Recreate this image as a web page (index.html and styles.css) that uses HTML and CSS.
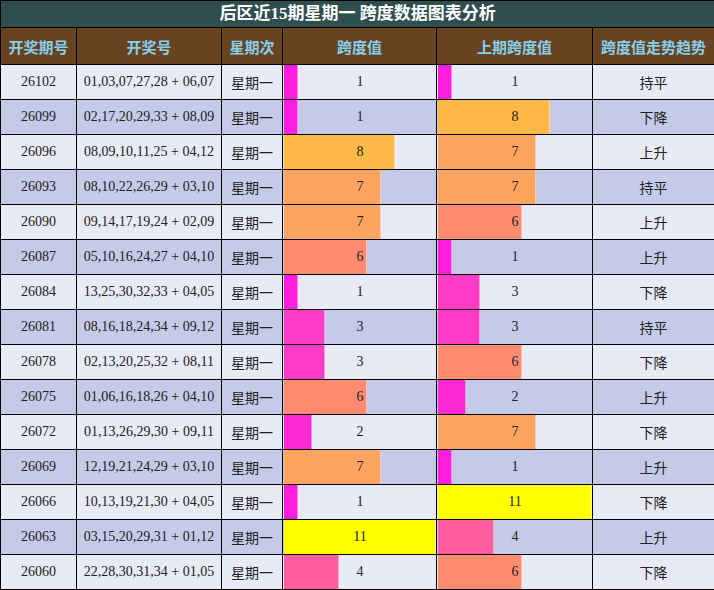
FILE: index.html
```html
<!DOCTYPE html>
<html lang="zh">
<head>
<meta charset="utf-8">
<title>后区近15期星期一 跨度数据图表分析</title>
<link rel="stylesheet" href="styles.css">
</head>
<body>
<table class="tbl">
  <colgroup>
    <col class="c1"><col class="c2"><col class="c3"><col class="c4"><col class="c5"><col class="c6">
  </colgroup>
  <thead>
    <tr class="title-row"><th colspan="6">后区近15期星期一 跨度数据图表分析</th></tr>
    <tr class="head-row">
      <th>开奖期号</th><th>开奖号</th><th>星期次</th><th>跨度值</th><th>上期跨度值</th><th>跨度值走势趋势</th>
    </tr>
  </thead>
  <tbody id="rows">
    <tr><td class="num">26102</td><td class="num">01,03,07,27,28 + 06,07</td><td class="cn">星期一</td>
      <td class="barcell"><div class="stack"><div class="bar v1" style="width:9.09%"></div><span class="val">1</span></div></td>
      <td class="barcell"><div class="stack"><div class="bar v1" style="width:9.09%"></div><span class="val">1</span></div></td>
      <td class="cn">持平</td></tr>
    <tr><td class="num">26099</td><td class="num">02,17,20,29,33 + 08,09</td><td class="cn">星期一</td>
      <td class="barcell"><div class="stack"><div class="bar v1" style="width:9.09%"></div><span class="val">1</span></div></td>
      <td class="barcell"><div class="stack"><div class="bar v8" style="width:72.73%"></div><span class="val">8</span></div></td>
      <td class="cn">下降</td></tr>
    <tr><td class="num">26096</td><td class="num">08,09,10,11,25 + 04,12</td><td class="cn">星期一</td>
      <td class="barcell"><div class="stack"><div class="bar v8" style="width:72.73%"></div><span class="val">8</span></div></td>
      <td class="barcell"><div class="stack"><div class="bar v7" style="width:63.64%"></div><span class="val">7</span></div></td>
      <td class="cn">上升</td></tr>
    <tr><td class="num">26093</td><td class="num">08,10,22,26,29 + 03,10</td><td class="cn">星期一</td>
      <td class="barcell"><div class="stack"><div class="bar v7" style="width:63.64%"></div><span class="val">7</span></div></td>
      <td class="barcell"><div class="stack"><div class="bar v7" style="width:63.64%"></div><span class="val">7</span></div></td>
      <td class="cn">持平</td></tr>
    <tr><td class="num">26090</td><td class="num">09,14,17,19,24 + 02,09</td><td class="cn">星期一</td>
      <td class="barcell"><div class="stack"><div class="bar v7" style="width:63.64%"></div><span class="val">7</span></div></td>
      <td class="barcell"><div class="stack"><div class="bar v6" style="width:54.55%"></div><span class="val">6</span></div></td>
      <td class="cn">上升</td></tr>
    <tr><td class="num">26087</td><td class="num">05,10,16,24,27 + 04,10</td><td class="cn">星期一</td>
      <td class="barcell"><div class="stack"><div class="bar v6" style="width:54.55%"></div><span class="val">6</span></div></td>
      <td class="barcell"><div class="stack"><div class="bar v1" style="width:9.09%"></div><span class="val">1</span></div></td>
      <td class="cn">上升</td></tr>
    <tr><td class="num">26084</td><td class="num">13,25,30,32,33 + 04,05</td><td class="cn">星期一</td>
      <td class="barcell"><div class="stack"><div class="bar v1" style="width:9.09%"></div><span class="val">1</span></div></td>
      <td class="barcell"><div class="stack"><div class="bar v3" style="width:27.27%"></div><span class="val">3</span></div></td>
      <td class="cn">下降</td></tr>
    <tr><td class="num">26081</td><td class="num">08,16,18,24,34 + 09,12</td><td class="cn">星期一</td>
      <td class="barcell"><div class="stack"><div class="bar v3" style="width:27.27%"></div><span class="val">3</span></div></td>
      <td class="barcell"><div class="stack"><div class="bar v3" style="width:27.27%"></div><span class="val">3</span></div></td>
      <td class="cn">持平</td></tr>
    <tr><td class="num">26078</td><td class="num">02,13,20,25,32 + 08,11</td><td class="cn">星期一</td>
      <td class="barcell"><div class="stack"><div class="bar v3" style="width:27.27%"></div><span class="val">3</span></div></td>
      <td class="barcell"><div class="stack"><div class="bar v6" style="width:54.55%"></div><span class="val">6</span></div></td>
      <td class="cn">下降</td></tr>
    <tr><td class="num">26075</td><td class="num">01,06,16,18,26 + 04,10</td><td class="cn">星期一</td>
      <td class="barcell"><div class="stack"><div class="bar v6" style="width:54.55%"></div><span class="val">6</span></div></td>
      <td class="barcell"><div class="stack"><div class="bar v2" style="width:18.18%"></div><span class="val">2</span></div></td>
      <td class="cn">上升</td></tr>
    <tr><td class="num">26072</td><td class="num">01,13,26,29,30 + 09,11</td><td class="cn">星期一</td>
      <td class="barcell"><div class="stack"><div class="bar v2" style="width:18.18%"></div><span class="val">2</span></div></td>
      <td class="barcell"><div class="stack"><div class="bar v7" style="width:63.64%"></div><span class="val">7</span></div></td>
      <td class="cn">下降</td></tr>
    <tr><td class="num">26069</td><td class="num">12,19,21,24,29 + 03,10</td><td class="cn">星期一</td>
      <td class="barcell"><div class="stack"><div class="bar v7" style="width:63.64%"></div><span class="val">7</span></div></td>
      <td class="barcell"><div class="stack"><div class="bar v1" style="width:9.09%"></div><span class="val">1</span></div></td>
      <td class="cn">上升</td></tr>
    <tr><td class="num">26066</td><td class="num">10,13,19,21,30 + 04,05</td><td class="cn">星期一</td>
      <td class="barcell"><div class="stack"><div class="bar v1" style="width:9.09%"></div><span class="val">1</span></div></td>
      <td class="barcell"><div class="stack"><div class="bar v11" style="width:100%"></div><span class="val">11</span></div></td>
      <td class="cn">下降</td></tr>
    <tr><td class="num">26063</td><td class="num">03,15,20,29,31 + 01,12</td><td class="cn">星期一</td>
      <td class="barcell"><div class="stack"><div class="bar v11" style="width:100%"></div><span class="val">11</span></div></td>
      <td class="barcell"><div class="stack"><div class="bar v4" style="width:36.36%"></div><span class="val">4</span></div></td>
      <td class="cn">上升</td></tr>
    <tr><td class="num">26060</td><td class="num">22,28,30,31,34 + 01,05</td><td class="cn">星期一</td>
      <td class="barcell"><div class="stack"><div class="bar v4" style="width:36.36%"></div><span class="val">4</span></div></td>
      <td class="barcell"><div class="stack"><div class="bar v6" style="width:54.55%"></div><span class="val">6</span></div></td>
      <td class="cn">下降</td></tr>
  </tbody>
</table>
</body>
</html>
```

FILE: styles.css
```css
html, body {
  margin: 0;
  padding: 0;
  background: #ffffff;
}

.tbl {
  width: 714px;
  border-collapse: collapse;
  table-layout: fixed;
  font-family: "Noto Sans CJK SC", "Noto Sans", sans-serif;
  color: #222222;
}

.c1 { width: 76px; }
.c2 { width: 145px; }
.c3 { width: 61px; }
.c4 { width: 154px; }
.c5 { width: 156px; }
.c6 { width: 122px; }

.tbl th,
.tbl td {
  border: 1px solid #000000;
  padding: 0;
  text-align: center;
  vertical-align: middle;
}

.title-row th {
  height: 26px;
  background: #2f4f4f;
  color: #ffffff;
  font-size: 17px;
  font-weight: bold;
  line-height: 26px;
  font-family: "Liberation Serif", "Noto Sans CJK SC", serif;
}

.head-row th {
  height: 36px;
  background: #664422;
  color: #87ceeb;
  font-size: 15px;
  font-weight: bold;
}

.tbl tbody tr:nth-child(odd) td { background: #e8eaf6; }
.tbl tbody tr:nth-child(even) td { background: #c5cae9; }

.tbl tbody td {
  height: 34px;
  line-height: 20px;
}

.num {
  font-family: "Liberation Serif", serif;
  font-size: 14px;
}

.cn {
  font-size: 14px;
}

.tbl tbody td.barcell {
  padding: 0 0 0 1px;
}

.stack {
  display: grid;
  height: 34px;
}

.stack > * {
  grid-area: 1 / 1;
}

.bar {
  height: 100%;
  justify-self: start;
  box-sizing: border-box;
  border-right: 1px solid rgba(255, 255, 255, 0.45);
}

.val {
  align-self: center;
  justify-self: center;
  font-family: "Liberation Serif", serif;
  font-size: 14px;
}

.v1 { background: #ff1ee0; }
.v2 { background: #ff28d6; }
.v3 { background: #ff3cc6; }
.v4 { background: #ff5fa0; }
.v6 { background: #ff8c70; }
.v7 { background: #ffa460; }
.v8 { background: #ffb946; }
.v11 { background: #ffff00; }
```
